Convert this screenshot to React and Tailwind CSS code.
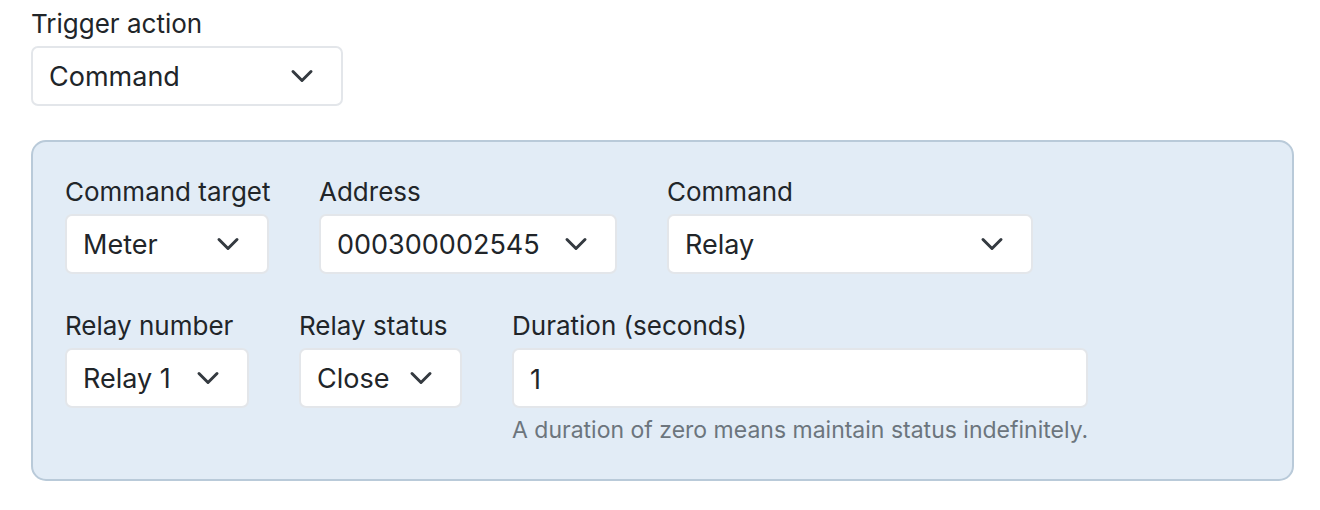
import React from "react";

const font = { fontFamily: "Inter, 'Liberation Sans', sans-serif" };

const Chevron = () => (
  <svg
    viewBox="0 0 16 16"
    className="w-[24px] h-[24px] shrink-0"
    fill="none"
    stroke="#343a40"
    strokeWidth="2"
    strokeLinecap="round"
    strokeLinejoin="round"
  >
    <path d="m2 5 6 6 6-6" />
  </svg>
);

const Select = ({ value, width }) => (
  <div
    className={`h-[60px] ${width} bg-white border-2 border-[#e3e6ea] rounded-[7px] flex items-center justify-between pl-[16px] pr-[27px] text-[27px] text-[#212529]`}
  >
    <span className="pt-[2px]">{value}</span>
    <Chevron />
  </div>
);

const Field = ({ label, className = "", children }) => (
  <div className={`flex flex-col ${className}`}>
    <label className="text-[26px] leading-[36px] mb-[4px] text-[#212529] whitespace-nowrap">
      {label}
    </label>
    {children}
  </div>
);

const App = () => {
  return (
    <div className="min-h-screen bg-white pl-[31px] pt-[6px]" style={font}>
      <Field label="Trigger action">
        <Select value="Command" width="w-[312px]" />
      </Field>

      <div className="mt-[34px] w-[1263px] h-[341px] bg-[#e2ecf6] border-2 border-[#b9cad9] rounded-[15px] pl-[32px] pt-[32px]">
        <div className="flex gap-[50px]">
          <Field label="Command target" className="w-[204px]">
            <Select value="Meter" width="w-[204px]" />
          </Field>
          <Field label="Address">
            <Select value="000300002545" width="w-[298px]" />
          </Field>
          <Field label="Command">
            <Select value="Relay" width="w-[366px]" />
          </Field>
        </div>

        <div className="flex gap-[50px] mt-[34px]">
          <Field label="Relay number" className="w-[184px]">
            <Select value="Relay 1" width="w-[184px]" />
          </Field>
          <Field label="Relay status" className="w-[163px]">
            <Select value="Close" width="w-[163px]" />
          </Field>
          <Field label="Duration (seconds)">
            <input
              type="text"
              defaultValue="1"
              className="h-[60px] w-[576px] bg-white border-2 border-[#e3e6ea] rounded-[7px] pl-[16px] pt-[2px] text-[27px] text-[#212529] outline-none"
            />
            <p className="mt-[7px] text-[23px] leading-[30px] text-[#6c757d]">
              A duration of zero means maintain status indefinitely.
            </p>
          </Field>
        </div>
      </div>
    </div>
  );
};

export default App;
